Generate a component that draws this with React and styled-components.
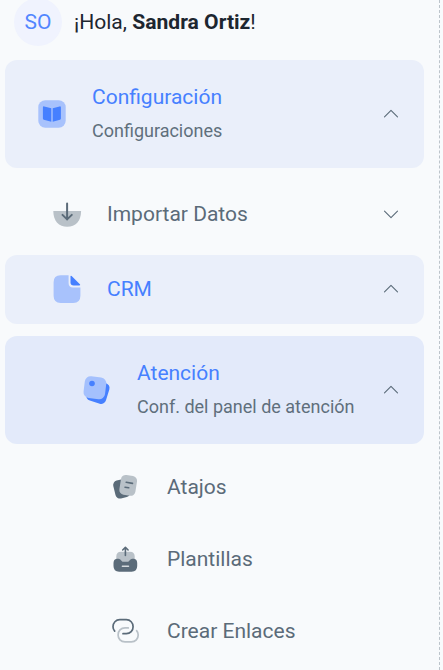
import React from "react";
import styled, { createGlobalStyle } from "styled-components";

const GlobalStyle = createGlobalStyle`
  * {
    box-sizing: border-box;
  }
  body {
    margin: 0;
    overflow: hidden;
    background-color: #f8fafc;
    font-family: Roboto, "Liberation Sans", sans-serif;
  }
`;

const Sidebar = styled.aside`
  width: 440px;
  height: 670px;
  overflow: hidden;
  background-color: #f8fafc;
  border-right: 1px dashed #bcc4cb;
`;

const Account = styled.div`
  display: flex;
  align-items: center;
  gap: 12px;
  height: 48px;
  margin: -2px 0 14px;
  padding-left: 14px;
`;

const Avatar = styled.div`
  display: flex;
  align-items: center;
  justify-content: center;
  width: 48px;
  height: 48px;
  border-radius: 50%;
  background-color: #f0f3fe;
  color: #5286ff;
  font-size: 21px;
`;

const Greeting = styled.div`
  color: #1d2630;
  font-size: 21.1px;
  line-height: 30px;
`;

const Nav = styled.nav`
  display: flex;
  flex-direction: column;
  padding: 0 15px 0 5px;
`;

const NavItem = styled.div`
  display: flex;
  align-items: center;
  flex-shrink: 0;
  height: ${(props) => props.$height}px;
  margin-bottom: ${(props) => props.$gap}px;
  padding: 0 24px 0 ${(props) => props.$indent}px;
  border-radius: 12px;
  background-color: ${(props) => props.$background || "transparent"};
`;

const IconSvg = styled.svg`
  flex-shrink: 0;
  width: 36px;
  height: 36px;
  margin-right: 22.4px;
`;

const Labels = styled.div`
  flex: 1;
  min-width: 0;
  white-space: nowrap;
`;

const Title = styled.div`
  color: ${(props) => (props.$active ? "#4680ff" : "#5b6b79")};
  font-size: 21px;
  line-height: 34px;
`;

const Subtitle = styled.div`
  color: #5f6f7c;
  font-size: 18px;
  line-height: 34px;
`;

const ChevronSvg = styled.svg`
  flex-shrink: 0;
  width: 18px;
  height: 18px;
  transform: ${(props) => (props.$open ? "none" : "rotate(180deg)")};
`;

const Chevron = ({ open }) => (
  <ChevronSvg $open={open} viewBox="0 0 18 18" fill="none">
    <path
      d="M2.5 11.8L9 5.4L15.5 11.8"
      stroke="#5b6b79"
      strokeWidth="1.1"
      strokeLinecap="round"
      strokeLinejoin="round"
    />
  </ChevronSvg>
);

const BookIcon = () => (
  <IconSvg viewBox="0 0 36 36">
    <rect x="4.3" y="4.3" width="27.4" height="27.4" rx="7" fill="#a8c2fc" />
    <path
      d="M17.3 12.2L10.2 10.4Q8.9 10.2 8.9 11.5V22.6Q8.9 23.6 9.8 23.8L17.3 25.7Z"
      fill="#4680ff"
    />
    <path
      d="M18.7 12.2L25.6 10.4Q26.9 10.2 26.9 11.5V22.6Q26.9 23.6 26 23.8L18.7 25.7Z"
      fill="#4680ff"
    />
  </IconSvg>
);

const ImportIcon = () => (
  <IconSvg viewBox="0 0 36 36">
    <path d="M4.3 15H32.1C32.1 25 26.5 30.8 18.2 30.8S4.3 25 4.3 15Z" fill="#b9c1c8" />
    <path
      d="M18.1 7.5V23.4M13.5 18.9L18.1 23.4L22.8 18.9"
      fill="none"
      stroke="#5b6b79"
      strokeWidth="2"
      strokeLinecap="round"
      strokeLinejoin="round"
    />
  </IconSvg>
);

const DocumentIcon = () => (
  <IconSvg viewBox="0 0 36 36">
    <path
      d="M11.5 4.3H19.6V12C19.6 15 21 16.4 24 16.4H31.4V24.8Q31.4 31.9 24.3 31.9H11.7Q4.6 31.9 4.6 24.8V11.3Q4.6 4.3 11.5 4.3Z"
      fill="#a8c2fc"
    />
    <path
      d="M21.5 5.6Q21.5 4.2 22.6 5.1L30.9 13.3Q31.8 14.4 30.4 14.4H24.7Q21.5 14.4 21.5 11.2Z"
      fill="#4680ff"
    />
  </IconSvg>
);

const TagIcon = () => (
  <IconSvg viewBox="0 0 36 36">
    <rect
      x="8.7"
      y="9.2"
      width="20.4"
      height="21.4"
      rx="5"
      fill="#4680ff"
      transform="rotate(17 18.9 19.9)"
    />
    <rect
      x="5.1"
      y="4.9"
      width="21.6"
      height="21.8"
      rx="5.8"
      fill="#a4c0fd"
      transform="rotate(7 15.9 15.8)"
    />
    <circle cx="13" cy="11.5" r="2.8" fill="#4680ff" />
  </IconSvg>
);

const NotesIcon = () => (
  <IconSvg viewBox="0 0 36 36">
    <rect
      x="5.2"
      y="10.6"
      width="15"
      height="18.4"
      rx="4.5"
      fill="#5b6b79"
      transform="rotate(-14 12.7 19.8)"
    />
    <rect
      x="11.1"
      y="6.4"
      width="16.2"
      height="20"
      rx="4.8"
      fill="#b9c1c8"
      transform="rotate(9 19.2 16.4)"
    />
    <path
      d="M17.2 13.2L23.5 14.4M16 18.2L19.7 18.8"
      stroke="#5b6b79"
      strokeWidth="1.6"
      strokeLinecap="round"
    />
  </IconSvg>
);

const TrayIcon = () => (
  <IconSvg viewBox="0 0 36 36">
    <path d="M12 10.8H21Q25.7 10.8 25.7 15.5V23H7.3V15.5Q7.3 10.8 12 10.8Z" fill="#b9c1c8" />
    <path
      d="M7.8 17.7H9.4C12 17.7 12.2 20.8 14.2 20.8H18.6C20.6 20.8 20.8 17.7 23.4 17.7H24.9Q28.2 18.3 28.2 22V25.1Q28.2 30.7 22.6 30.7H10.1Q4.5 30.7 4.5 25.1V22Q4.5 18.3 7.8 17.7Z"
      fill="#5b6b79"
    />
    <path d="M13.4 25.2H19.5" stroke="#d5dade" strokeWidth="1.5" strokeLinecap="round" />
    <path
      d="M16.4 6.6V14.4M13.7 9L16.4 6.3L19.1 9"
      fill="none"
      stroke="#5b6b79"
      strokeWidth="1.6"
      strokeLinecap="round"
      strokeLinejoin="round"
    />
  </IconSvg>
);

const LinkIcon = () => (
  <IconSvg viewBox="0 0 36 36" fill="none" strokeWidth="1.7" strokeLinecap="round">
    <path
      d="M19.3 14.9H16C11.8 14.9 9.1 18 9.1 21.9S11.8 28.9 16 28.9H22.3C26.5 28.9 29.2 25.8 29.2 21.9C29.2 20.2 28.7 18.8 27.6 17.6"
      stroke="#b9c1c8"
    />
    <path
      d="M14 20.7H17.3C21.3 20.7 24.1 17.6 24.1 13.7S21.3 6.7 17.3 6.7H10.8C6.8 6.7 4 9.8 4 13.7C4 15.4 4.6 16.9 5.7 18.1"
      stroke="#5b6b79"
    />
  </IconSvg>
);

const items = [
  {
    title: "Configuración",
    subtitle: "Configuraciones",
    icon: BookIcon,
    indent: 28.6,
    height: 108,
    gap: 12,
    background: "#eaeffa",
    active: true,
    collapsible: true,
  },
  {
    title: "Importar Datos",
    icon: ImportIcon,
    indent: 43.6,
    height: 68,
    gap: 7,
    collapsible: true,
  },
  {
    title: "CRM",
    icon: DocumentIcon,
    indent: 43.6,
    height: 68.6,
    gap: 12.4,
    background: "#eaeffa",
    active: true,
    collapsible: true,
  },
  {
    title: "Atención",
    subtitle: "Conf. del panel de atención",
    icon: TagIcon,
    indent: 73.6,
    height: 108,
    gap: 9,
    background: "#e3eafa",
    active: true,
    collapsible: true,
  },
  { title: "Atajos", icon: NotesIcon, indent: 103.6, height: 68, gap: 4 },
  { title: "Plantillas", icon: TrayIcon, indent: 103.6, height: 68, gap: 4 },
  { title: "Crear Enlaces", icon: LinkIcon, indent: 103.6, height: 68, gap: 0 },
];

const App = () => {
  return (
    <>
      <GlobalStyle />
      <Sidebar>
        <Account>
          <Avatar>SO</Avatar>
          <Greeting>
            ¡Hola, <strong>Sandra Ortiz</strong>!
          </Greeting>
        </Account>
        <Nav>
          {items.map((item) => (
            <NavItem
              key={item.title}
              $height={item.height}
              $gap={item.gap}
              $indent={item.indent}
              $background={item.background}
            >
              <item.icon />
              <Labels>
                <Title $active={item.active}>{item.title}</Title>
                {item.subtitle && <Subtitle>{item.subtitle}</Subtitle>}
              </Labels>
              {item.collapsible && <Chevron open={item.active} />}
            </NavItem>
          ))}
        </Nav>
      </Sidebar>
    </>
  );
};

export default App;
